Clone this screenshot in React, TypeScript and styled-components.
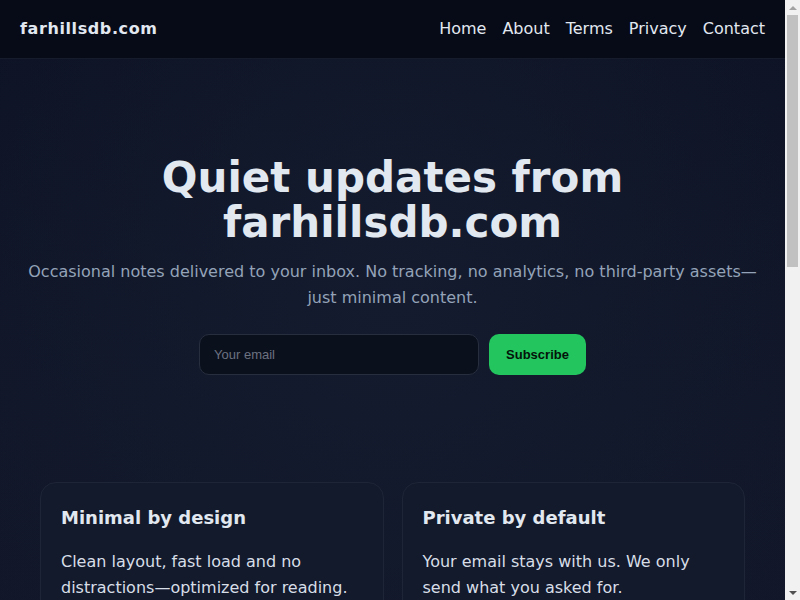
import React from 'react';
import styled, { createGlobalStyle } from 'styled-components';

const GlobalStyle = createGlobalStyle`
  html, body {
    margin: 0;
    padding: 0;
  }
  body {
    background: #0c1222;
    color: #e2e8f0;
    font-family: "DejaVu Sans", sans-serif;
    min-height: 100vh;
    padding-right: 15px;
  }
  * {
    box-sizing: border-box;
  }
`;

const Page = styled.div`
  min-height: 100vh;
  background:
    radial-gradient(ellipse at 50% 300px, #141b2e 0%, rgba(17, 24, 39, 0) 500px),
    linear-gradient(180deg, #0d1324 0px, #111729 400px, #121829 700px);
  padding-bottom: 80px;
`;

/* the browser's scrollbar, as it shows in the screenshot */
const ScrollRail = styled.div`
  position: fixed;
  top: 0;
  right: 0;
  width: 15px;
  height: 100vh;
  background: #f1f1f1;
  display: flex;
  flex-direction: column;
`;

const ScrollArrow = styled.div`
  height: 15px;
  display: flex;
  align-items: center;
  justify-content: center;
`;

const ScrollTrack = styled.div`
  flex: 1;
  padding: 0 2px;
`;

const ScrollThumb = styled.div`
  height: 252px;
  background: #c1c1c1;
`;

const Header = styled.header`
  display: flex;
  align-items: center;
  justify-content: space-between;
  height: 59px;
  padding: 0 20px 2px;
  background: #070b18;
  border-bottom: 1px solid #161c2b;
`;

const Logo = styled.div`
  font-weight: 700;
  font-size: 16px;
  letter-spacing: 0.6px;
  color: #e2e8f0;
`;

const Nav = styled.nav`
  display: flex;
  gap: 16px;
`;

const NavLink = styled.a`
  color: #e2e8f0;
  font-size: 16px;
  text-decoration: none;
`;

const Hero = styled.section`
  padding: 96px 20px 107px;
  text-align: center;
`;

const Title = styled.h1`
  margin: 0;
  font-size: 42px;
  line-height: 45px;
  font-weight: 700;
  color: #e2e8f0;
`;

const Lead = styled.p`
  margin: 14px 0 0;
  font-size: 16px;
  line-height: 26px;
  color: #94a3b8;
`;

const Form = styled.form`
  display: flex;
  justify-content: center;
  gap: 10px;
  margin-top: 23px;
`;

const EmailInput = styled.input`
  width: 280px;
  height: 41px;
  padding: 0 14px;
  background: #0b101d;
  border: 1px solid #272e3e;
  border-radius: 10px;
  color: #e2e8f0;
  font-family: "Liberation Sans", Arial, sans-serif;
  font-size: 13px;
  outline: none;

  &::placeholder {
    color: #6b7280;
  }
`;

const Button = styled.button`
  height: 41px;
  padding: 0 17px;
  background: #22c55e;
  border: none;
  border-radius: 10px;
  color: #04130a;
  font-family: "Liberation Sans", Arial, sans-serif;
  font-weight: 700;
  font-size: 13px;
  cursor: pointer;
`;

const Cards = styled.section`
  display: grid;
  grid-template-columns: 1fr 1fr;
  gap: 18px;
  padding: 0 40px;
`;

const Card = styled.article`
  background: #131a2b;
  border: 1px solid #1e2536;
  border-radius: 16px;
  padding: 20px 20px 24px;
`;

const CardTitle = styled.h3`
  margin: 4px 0 0;
  font-size: 18px;
  font-weight: 700;
  color: #e2e8f0;
`;

const CardText = styled.p`
  margin: 21px 0 0;
  font-size: 16px;
  line-height: 26px;
  color: #d7dee8;
`;

const links = ['Home', 'About', 'Terms', 'Privacy', 'Contact'];

const features = [
  {
    title: 'Minimal by design',
    text: 'Clean layout, fast load and no distractions\u2014optimized for reading.',
  },
  {
    title: 'Private by default',
    text: 'Your email stays with us. We only send what you asked for.',
  },
];

export default function App() {
  return (
    <Page>
      <GlobalStyle />
      <Header>
        <Logo>farhillsdb.com</Logo>
        <Nav>
          {links.map(l => (
            <NavLink key={l} href="#">{l}</NavLink>
          ))}
        </Nav>
      </Header>
      <Hero>
        <Title>Quiet updates from<br />farhillsdb.com</Title>
        <Lead>
          Occasional notes delivered to your inbox. No tracking, no analytics, no third-party assets—just minimal content.
        </Lead>
        <Form onSubmit={e => e.preventDefault()}>
          <EmailInput type="email" placeholder="Your email" />
          <Button type="submit">Subscribe</Button>
        </Form>
      </Hero>
      <Cards>
        {features.map(f => (
          <Card key={f.title}>
            <CardTitle>{f.title}</CardTitle>
            <CardText>{f.text}</CardText>
          </Card>
        ))}
      </Cards>
      <ScrollRail>
        <ScrollArrow>
          <svg width="8" height="4" viewBox="0 0 8 4"><path d="M0 4 L4 0 L8 4 Z" fill="#a3a3a3" /></svg>
        </ScrollArrow>
        <ScrollTrack>
          <ScrollThumb />
        </ScrollTrack>
        <ScrollArrow>
          <svg width="8" height="4" viewBox="0 0 8 4"><path d="M0 0 L8 0 L4 4 Z" fill="#505050" /></svg>
        </ScrollArrow>
      </ScrollRail>
    </Page>
  );
}
